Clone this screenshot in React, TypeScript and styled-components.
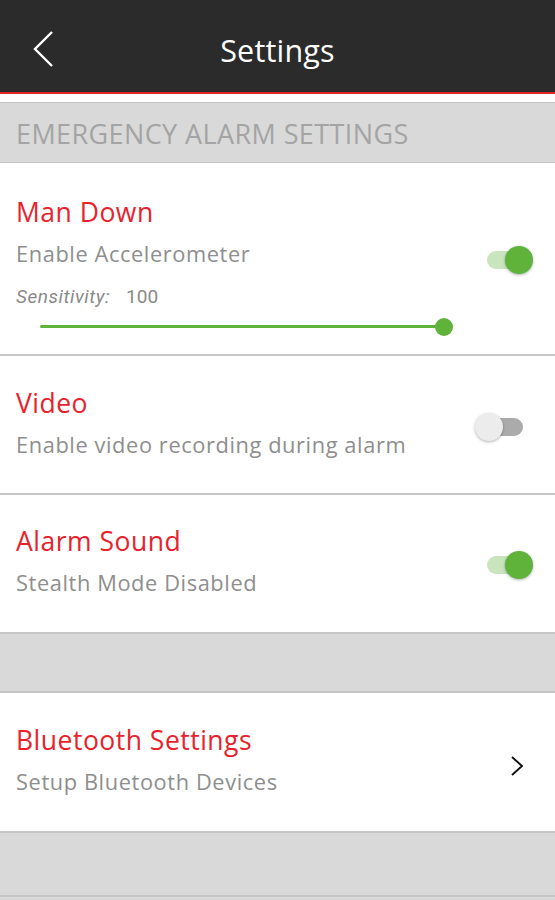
import React from "react";
import styled, { createGlobalStyle } from "styled-components";

const GlobalStyle = createGlobalStyle`
  html, body {
    margin: 0;
    padding: 0;
    background: #ffffff;
  }
  body {
    font-family: "Open Sans", "Noto Sans", sans-serif;
    -webkit-font-smoothing: antialiased;
  }
`;

const Page = styled.div`
  width: 555px;
  height: 900px;
  display: flex;
  flex-direction: column;
  background: #ffffff;
  overflow: hidden;
`;

const TopBar = styled.header`
  height: 92px;
  background: #2b2b2b;
  border-bottom: 2px solid #e0242b;
  display: grid;
  grid-template-columns: 80px 1fr 80px;
  align-items: center;
`;

const BackButton = styled.button`
  background: none;
  border: none;
  padding: 6px 0 0 32px;
  height: 100%;
  display: flex;
  align-items: center;
  cursor: pointer;
`;

const Title = styled.h1`
  margin: 0;
  padding-top: 8px;
  text-align: center;
  color: #ffffff;
  font-size: 30.5px;
  font-weight: 400;
  letter-spacing: 0.2px;
`;

const SectionHeader = styled.div`
  margin-top: 8px;
  height: 61px;
  box-sizing: border-box;
  background: #d9d9d9;
  border-top: 1px solid #c4c4c4;
  border-bottom: 1px solid #c4c4c4;
  display: flex;
  align-items: center;
  padding: 3px 0 0 16px;
  color: #a4a4a4;
  font-size: 27px;
  letter-spacing: 0.4px;
`;

const Spacer = styled.div<{ $h: number; $last?: boolean }>`
  height: ${(p) => p.$h}px;
  background: #d9d9d9;
  border-bottom: ${(p) => (p.$last ? "0" : "2px solid #c6c6c6")};
`;

const Row = styled.div<{ $h: number; $top?: number }>`
  height: ${(p) => p.$h}px;
  box-sizing: border-box;
  display: flex;
  align-items: center;
  padding: ${(p) => p.$top ?? 0}px 23px 0 16px;
  border-bottom: 2px solid #c6c6c6;
  background: #ffffff;
`;

const RowText = styled.div`
  flex: 1;
  display: flex;
  flex-direction: column;
`;

const RowTitle = styled.div`
  color: #e8222b;
  font-size: 26.5px;
  letter-spacing: 0.5px;
  line-height: 40px;
`;

const RowSub = styled.div`
  color: #8e8e8e;
  font-size: 21.8px;
  letter-spacing: 0.6px;
  line-height: 44px;
`;

const SensLine = styled.div`
  margin-top: 9px;
  display: flex;
  gap: 16px;
  font-family: Roboto, "Liberation Sans", sans-serif;
  font-size: 19px;
  line-height: 24px;
  color: #8a8a8a;
`;

const SensLabel = styled.span`
  font-style: italic;
  letter-spacing: 0.5px;
`;

const SliderWrap = styled.div`
  margin: 8px 0 0 24px;
  width: 413px;
  height: 20px;
  position: relative;
  display: flex;
  align-items: center;
`;

const SliderTrack = styled.div`
  height: 3px;
  width: 100%;
  background: #5fb33b;
  border-radius: 2px;
`;

const SliderThumb = styled.div`
  position: absolute;
  right: 0;
  top: 1px;
  width: 18px;
  height: 18px;
  border-radius: 50%;
  background: #5fb33b;
`;

const Toggle = styled.div<{ $on: boolean; $offset?: number }>`
  position: relative;
  width: 57px;
  height: 30px;
  margin-top: ${(p) => p.$offset ?? 0}px;
  flex-shrink: 0;

  &::before {
    content: "";
    position: absolute;
    left: ${(p) => (p.$on ? 12 : 6)}px;
    right: ${(p) => (p.$on ? 7 : 9)}px;
    top: 6px;
    height: 18px;
    border-radius: 9px;
    background: ${(p) => (p.$on ? "#c9e5bd" : "#ababab")};
  }

  &::after {
    content: "";
    position: absolute;
    top: 1px;
    left: ${(p) => (p.$on ? "30px" : "0px")};
    width: 28px;
    height: 28px;
    border-radius: 50%;
    background: ${(p) => (p.$on ? "#5fb33b" : "#ececec")};
    box-shadow: 0 1px 3px rgba(0, 0, 0, 0.3);
  }
`;

const Chevron = styled.div`
  margin: 8px 7px 0 0;
  display: flex;
  align-items: center;
`;

export default function App() {
  return (
    <>
      <GlobalStyle />
      <Page>
        <TopBar>
          <BackButton aria-label="Back">
            <svg width="24" height="38" viewBox="0 0 24 38">
              <path d="M20 2 L3 19 L20 36" fill="none" stroke="#ffffff" strokeWidth="2.4" />
            </svg>
          </BackButton>
          <Title>Settings</Title>
          <div />
        </TopBar>

        <SectionHeader>EMERGENCY ALARM SETTINGS</SectionHeader>

        <Row $h={194} $top={12}>
          <RowText>
            <RowTitle>Man Down</RowTitle>
            <RowSub>Enable Accelerometer</RowSub>
            <SensLine>
              <SensLabel>Sensitivity:</SensLabel>
              <span>100</span>
            </SensLine>
            <SliderWrap>
              <SliderTrack />
              <SliderThumb />
            </SliderWrap>
          </RowText>
          <Toggle $on $offset={-8} />
        </Row>

        <Row $h={139}>
          <RowText>
            <RowTitle>Video</RowTitle>
            <RowSub>Enable video recording during alarm</RowSub>
          </RowText>
          <Toggle $on={false} $offset={4} />
        </Row>

        <Row $h={139}>
          <RowText>
            <RowTitle>Alarm Sound</RowTitle>
            <RowSub>Stealth Mode Disabled</RowSub>
          </RowText>
          <Toggle $on $offset={4} />
        </Row>

        <Spacer $h={58} />

        <Row $h={140}>
          <RowText>
            <RowTitle>Bluetooth Settings</RowTitle>
            <RowSub>Setup Bluetooth Devices</RowSub>
          </RowText>
          <Chevron>
            <svg width="16" height="22" viewBox="0 0 16 22">
              <path d="M3 2 L13 11 L3 20" fill="none" stroke="#111111" strokeWidth="1.9" />
            </svg>
          </Chevron>
        </Row>

        <Spacer $h={62} />
        <Spacer $h={3} $last />
      </Page>
    </>
  );
}
